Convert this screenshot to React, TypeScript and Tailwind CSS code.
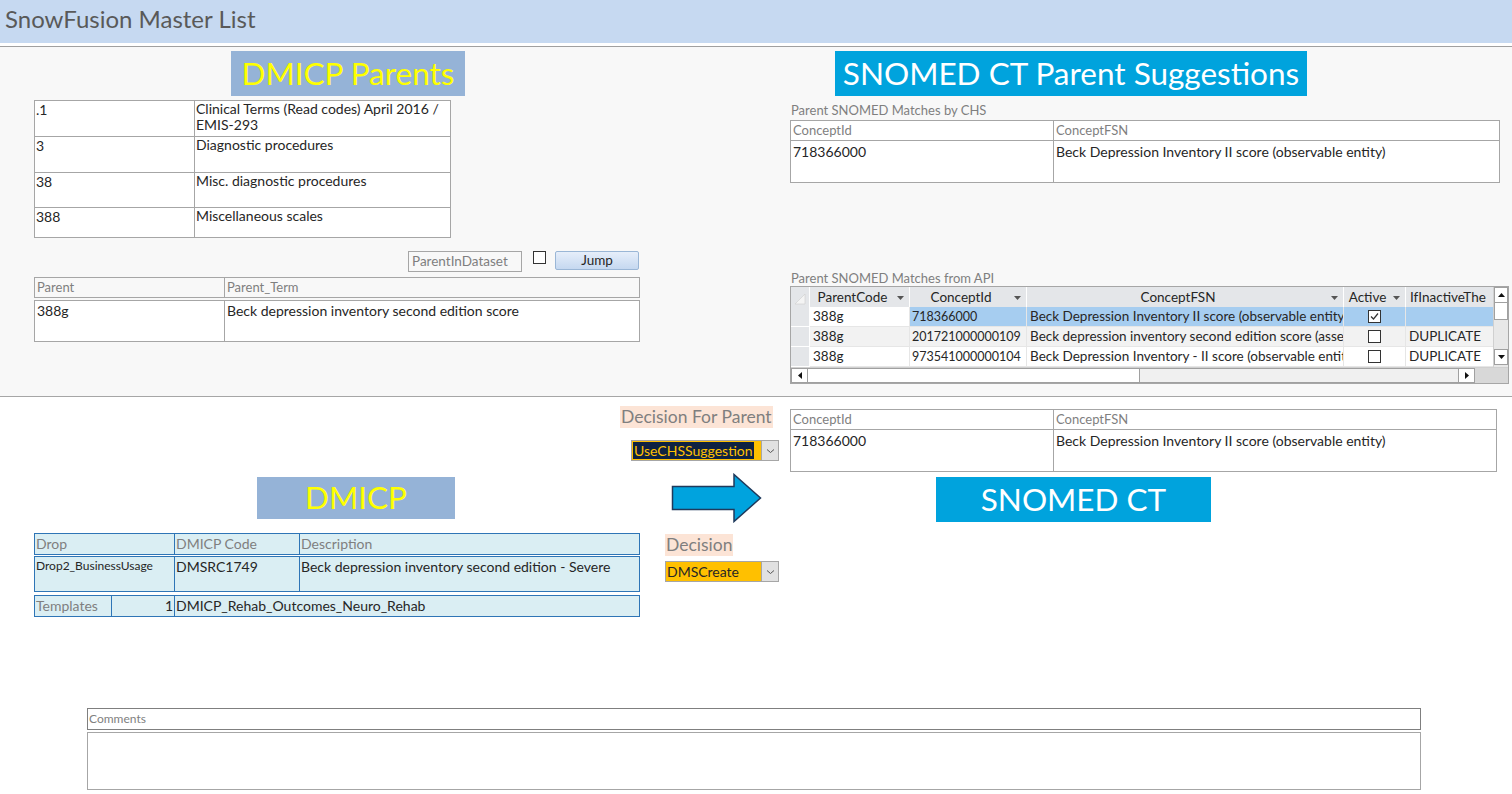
import React from "react";

const FONT = { fontFamily: "Lato, 'Open Sans', sans-serif" };

function Banner({ text, className }: { text: string; className: string }) {
  return (
    <div className={`flex items-center justify-center text-[31.5px] leading-none ${className}`}>
      {text}
    </div>
  );
}

function Combo({ value, selected }: { value: string; selected?: boolean }) {
  return (
    <div className="flex h-[21px] border border-[#a6a6a6] bg-[#ffc000]">
      <div className="flex flex-1 items-center pl-[1px]">
        <span
          className={`text-[14px] leading-[17px] ${
            selected ? "bg-[#0e2241] px-[1px] text-[#ffc000]" : "text-[#262626]"
          }`}
        >
          {value}
        </span>
      </div>
      <div className="flex w-[17px] items-center justify-center border-l border-[#a6a6a6] bg-[#e1e1e1]">
        <svg width="9" height="6" viewBox="0 0 9 6">
          <path d="M1 1.5 L4.5 4.5 L8 1.5" fill="none" stroke="#555" strokeWidth="1" />
        </svg>
      </div>
    </div>
  );
}

function PeachLabel({ text }: { text: string }) {
  return (
    <div className="inline-block h-[22px] bg-[#fce4d6] px-[1px] text-[17.5px] leading-[22px] text-[#7f7f7f]">
      {text}
    </div>
  );
}

function GrayTable({
  cols,
  header,
  row,
  width,
}: {
  cols: string;
  header: string[];
  row: string[];
  width: string;
}) {
  return (
    <div className={width}>
      <div className={`grid ${cols} h-[21px] border border-[#a6a6a6] bg-white text-[13px]`}>
        {header.map((h, i) => (
          <div
            key={h}
            className={`px-[2px] leading-[19px] text-[#7f7f7f] ${i > 0 ? "border-l border-[#a6a6a6]" : ""}`}
          >
            {h}
          </div>
        ))}
      </div>
      <div className={`grid ${cols} h-[42px] border border-t-0 border-[#a6a6a6] bg-white text-[14px]`}>
        {row.map((c, i) => (
          <div
            key={c}
            className={`px-[2px] pt-[2px] leading-[17px] text-[#262626] ${i > 0 ? "border-l border-[#a6a6a6]" : ""}`}
          >
            {c}
          </div>
        ))}
      </div>
    </div>
  );
}

function Check({ checked }: { checked?: boolean }) {
  return (
    <div className="flex h-[13px] w-[13px] items-center justify-center border border-[#333] bg-white">
      {checked && (
        <svg width="11" height="11" viewBox="0 0 11 11">
          <path d="M2 5.5 L4.5 8 L9 2.5" fill="none" stroke="#333" strokeWidth="1.2" />
        </svg>
      )}
    </div>
  );
}

const apiRows = [
  { code: "388g", id: "718366000", fsn: "Beck Depression Inventory II score (observable entity)", active: true, inact: "" },
  { code: "388g", id: "201721000000109", fsn: "Beck depression inventory second edition score (assessment scale)", active: false, inact: "DUPLICATE" },
  { code: "388g", id: "973541000000104", fsn: "Beck Depression Inventory - II score (observable entity)", active: false, inact: "DUPLICATE" },
];

function HeadCell({ text }: { text: string }) {
  return (
    <div className="relative flex items-center border-r border-white bg-[#e4e6e9] pr-[14px] text-[13.5px] text-[#262626]">
      <span className="flex-1 truncate text-center">{text}</span>
      <svg className="absolute right-[5px] top-[9px]" width="7" height="4" viewBox="0 0 7 4">
        <path d="M0 0 H7 L3.5 4 Z" fill="#555" />
      </svg>
    </div>
  );
}

function ApiGrid() {
  const cols = "grid-cols-[19px_100px_117px_317px_62px_87px]";
  return (
    <div className="w-[719px] border border-[#a6a6a6] bg-white text-[13.5px]">
      <div className="flex">
        <div className="w-[702px]">
          <div className={`grid ${cols} h-[20px]`}>
            <div className="flex items-end justify-start border-r border-white bg-[#e4e6e9] pb-[2px] pl-[3px]">
              <svg width="12" height="12" viewBox="0 0 12 12">
                <path d="M1 11 L11 1 V11 Z" fill="#f4f4f4" stroke="#cfcfcf" strokeWidth="0.6" />
              </svg>
            </div>
            <HeadCell text="ParentCode" />
            <HeadCell text="ConceptId" />
            <HeadCell text="ConceptFSN" />
            <HeadCell text="Active" />
            <div className="flex items-center overflow-hidden bg-[#e4e6e9] pl-[4px] text-[13.5px] text-[#262626]">
              <span className="whitespace-nowrap">IfInactiveThe</span>
            </div>
          </div>
          {apiRows.map((r, i) => {
            const sel = i === 0;
            const rowBg = sel ? "bg-[#a6cdf0]" : i === 1 ? "bg-[#f2f2f2]" : "bg-white";
            return (
              <div key={r.id} className={`grid ${cols} h-[20px] text-[#262626]`}>
                <div className="border-b border-r border-white bg-[#e4e6e9]" />
                <div
                  className={`overflow-hidden border-b border-r border-[#e6e6e6] pl-[3px] leading-[19px] ${
                    i === 1 ? "bg-[#f2f2f2]" : "bg-white"
                  }`}
                >
                  {r.code}
                </div>
                <div
                  className={`overflow-hidden whitespace-nowrap border-b border-r border-[#e6e6e6] pl-[2px] text-[12.5px] leading-[19px] ${rowBg}`}
                >
                  {r.id}
                </div>
                <div
                  className={`overflow-hidden whitespace-nowrap border-b border-r border-[#e6e6e6] pl-[3px] leading-[19px] ${rowBg}`}
                >
                  {r.fsn}
                </div>
                <div className={`flex items-center justify-center border-b border-r border-[#e6e6e6] ${rowBg}`}>
                  <Check checked={r.active} />
                </div>
                <div className={`overflow-hidden whitespace-nowrap border-b border-[#e6e6e6] pl-[3px] leading-[19px] ${rowBg}`}>
                  {r.inact}
                </div>
              </div>
            );
          })}
        </div>
        {/* vertical scrollbar */}
        <div className="flex w-[16px] flex-col border-l border-[#d0d0d0] bg-[#e8e8e8]">
          <div className="flex h-[16px] items-center justify-center border border-[#a0a0a0] bg-white">
            <svg width="7" height="4" viewBox="0 0 7 4">
              <path d="M0 4 H7 L3.5 0 Z" fill="#111" />
            </svg>
          </div>
          <div className="h-[17px] border border-t-0 border-[#a0a0a0] bg-white" />
          <div className="flex-1" />
          <div className="mb-[2px] flex h-[16px] items-center justify-center border border-[#a0a0a0] bg-white">
            <svg width="7" height="4" viewBox="0 0 7 4">
              <path d="M0 0 H7 L3.5 4 Z" fill="#111" />
            </svg>
          </div>
        </div>
      </div>
      {/* horizontal scrollbar */}
      <div className="flex h-[16px] border-t border-[#d0d0d0] bg-[#e8e8e8]">
        <div className="flex w-[684px] border border-[#a0a0a0] bg-[#f0f0f0]">
          <div className="flex w-[16px] items-center justify-center border-r border-[#a0a0a0] bg-white">
            <svg width="4" height="7" viewBox="0 0 4 7">
              <path d="M4 0 V7 L0 3.5 Z" fill="#111" />
            </svg>
          </div>
          <div className="w-[332px] border-r border-[#a0a0a0] bg-white" />
          <div className="flex-1" />
          <div className="flex w-[16px] items-center justify-center border-l border-[#a0a0a0] bg-white">
            <svg width="4" height="7" viewBox="0 0 4 7">
              <path d="M0 0 V7 L4 3.5 Z" fill="#111" />
            </svg>
          </div>
        </div>
        <div className="flex-1 bg-[#d8d8d8]" />
      </div>
    </div>
  );
}

const parents = [
  { code: ".1", term: "Clinical Terms (Read codes) April 2016 / EMIS-293", h: "h-[35px]" },
  { code: "3", term: "Diagnostic procedures", h: "h-[36px]" },
  { code: "38", term: "Misc. diagnostic procedures", h: "h-[35px]" },
  { code: "388", term: "Miscellaneous scales", h: "h-[30px]" },
];

function Arrow() {
  return (
    <svg width="92" height="50" viewBox="0 0 92 50">
      <polygon
        points="1.5,13.5 63,13.5 63,1.5 89.5,25 63,48.5 63,36.5 1.5,36.5"
        fill="#00a3de"
        stroke="#1f3a5c"
        strokeWidth="1.5"
      />
    </svg>
  );
}

export default function App() {
  return (
    <div className="h-[794px] w-[1512px] overflow-hidden bg-white" style={FONT}>
      {/* title bar */}
      <div className="h-[43px] bg-[#c6d9f1] pl-[5px] text-[24px] leading-[38px] text-[#595959]">
        SnowFusion Master List
      </div>
      <div className="mt-[3px] border-t border-[#a0a0a0]" />

      {/* parents section */}
      <div className="flex h-[350px] border-b border-[#a6a6a6] bg-[#f8f8f8]">
        {/* left column */}
        <div className="ml-[34px] w-[606px] pt-[4px]">
          <Banner text="DMICP Parents" className="ml-[197px] h-[45px] w-[234px] bg-[#95b3d7] text-[#ffff00]" />
          <div className="mt-[4px] w-[417px] border border-[#a6a6a6] bg-white text-[14px] text-[#262626]">
            {parents.map((p, i) => (
              <div
                key={p.code}
                className={`grid grid-cols-[159px_1fr] ${p.h} ${i > 0 ? "border-t border-[#a6a6a6]" : ""}`}
              >
                <div className="px-[1px] leading-[17px]">{p.code}</div>
                <div className="border-l border-[#a6a6a6] px-[1px] leading-[16px]">{p.term}</div>
              </div>
            ))}
          </div>
          <div className="mt-[13px] flex items-start">
            <div className="ml-[374px] h-[21px] w-[114px] border border-[#a6a6a6] bg-[#f8f8f8] px-[3px] text-[13.5px] leading-[19px] text-[#7f7f7f]">
              ParentInDataset
            </div>
            <div className="ml-[11px] h-[13px] w-[13px] border border-[#333] bg-white" />
            <div className="ml-[9px] h-[19px] w-[84px] rounded-[2px] border border-[#9ab6d6] bg-gradient-to-b from-[#e6eefa] to-[#c5d8f0] text-center text-[13.5px] leading-[17px] text-[#262626]">
              Jump
            </div>
          </div>
          <div className="mt-[5px]">
            <div className="grid h-[21px] w-[606px] grid-cols-[189px_1fr] border border-[#a6a6a6] bg-[#f8f8f8] text-[13px] text-[#7f7f7f]">
              <div className="px-[2px] leading-[19px]">Parent</div>
              <div className="border-l border-[#a6a6a6] px-[2px] leading-[19px]">Parent_Term</div>
            </div>
            <div className="mt-[2px] grid h-[42px] w-[606px] grid-cols-[189px_1fr] border border-[#a6a6a6] bg-white text-[14px] text-[#262626]">
              <div className="px-[2px] pt-[1px] leading-[17px]">388g</div>
              <div className="border-l border-[#a6a6a6] px-[2px] pt-[1px] leading-[17px]">
                Beck depression inventory second edition score
              </div>
            </div>
          </div>
        </div>

        {/* right column */}
        <div className="ml-[150px] w-[719px] pt-[4px]">
          <Banner
            text="SNOMED CT Parent Suggestions"
            className="ml-[45px] h-[45px] w-[472px] bg-[#00a3dd] text-white"
          />
          <div className="mt-[4px] pl-[1px] text-[13px] leading-[20px] text-[#7f7f7f]">Parent SNOMED Matches by CHS</div>
          <GrayTable
            width="w-[710px]"
            cols="grid-cols-[262px_1fr]"
            header={["ConceptId", "ConceptFSN"]}
            row={["718366000", "Beck Depression Inventory II score (observable entity)"]}
          />
          <div className="mt-[88px] pl-[1px] text-[13px] leading-[15px] text-[#7f7f7f]">Parent SNOMED Matches from API</div>
          <ApiGrid />
        </div>
      </div>

      {/* decision row */}
      <div className="flex h-[76px] items-start">
        <div className="ml-[620px] w-[159px] pt-[8px]">
          <PeachLabel text="Decision For Parent" />
          <div className="ml-[11px] mt-[11px]">
            <Combo value="UseCHSSuggestion" selected />
          </div>
        </div>
        <div className="ml-[11px] mt-[12px]">
          <GrayTable
            width="w-[707px]"
            cols="grid-cols-[262px_1fr]"
            header={["ConceptId", "ConceptFSN"]}
            row={["718366000", "Beck Depression Inventory II score (observable entity)"]}
          />
        </div>
      </div>

      {/* banners + arrow */}
      <div className="flex h-[49px] items-start">
        <Banner text="DMICP" className="ml-[257px] mt-[4px] h-[42px] w-[198px] bg-[#95b3d7] text-[#ffff00]" />
        <div className="ml-[216px]">
          <Arrow />
        </div>
        <Banner text="SNOMED CT" className="ml-[173px] mt-[4px] h-[45px] w-[275px] bg-[#00a3dd] text-white" />
      </div>

      {/* DMICP details + decision */}
      <div className="mt-[11px] flex items-start">
        <div className="ml-[34px] w-[606px] text-[14px]">
          <div className="grid h-[22px] grid-cols-[139px_125px_1fr] border border-[#2e75b6] bg-[#daeef3] text-[#7f7f7f]">
            <div className="px-[1px] leading-[20px]">Drop</div>
            <div className="border-l border-[#2e75b6] px-[1px] leading-[20px]">DMICP Code</div>
            <div className="border-l border-[#2e75b6] px-[1px] leading-[20px]">Description</div>
          </div>
          <div className="mt-[1px] grid h-[36px] grid-cols-[139px_125px_1fr] border border-[#2e75b6] bg-[#daeef3] text-[#262626]">
            <div className="px-[1px] pt-[1px] text-[12px] leading-[16px]">Drop2_BusinessUsage</div>
            <div className="border-l border-[#2e75b6] px-[1px] pt-[1px] leading-[17px]">DMSRC1749</div>
            <div className="border-l border-[#2e75b6] px-[1px] pt-[1px] leading-[17px]">
              Beck depression inventory second edition - Severe
            </div>
          </div>
          <div className="mt-[3px] grid h-[22px] grid-cols-[76px_63px_1fr] border border-[#2e75b6] bg-[#daeef3]">
            <div className="px-[1px] leading-[20px] text-[#7f7f7f]">Templates</div>
            <div className="border-l border-[#2e75b6] px-[1px] text-right leading-[20px] text-[#262626]">1</div>
            <div className="border-l border-[#2e75b6] px-[1px] leading-[20px] text-[#262626]">
              DMICP_Rehab_Outcomes_Neuro_Rehab
            </div>
          </div>
        </div>
        <div className="ml-[25px] w-[114px]">
          <PeachLabel text="Decision" />
          <div className="mt-[4px]">
            <Combo value="DMSCreate" />
          </div>
        </div>
      </div>

      {/* comments */}
      <div className="ml-[87px] mt-[91px] w-[1334px]">
        <div className="h-[22px] border border-[#7f7f7f] bg-white px-[1px] text-[12px] leading-[20px] text-[#7f7f7f]">
          Comments
        </div>
        <div className="mt-[2px] h-[58px] border border-[#a6a6a6] bg-white" />
      </div>
    </div>
  );
}
